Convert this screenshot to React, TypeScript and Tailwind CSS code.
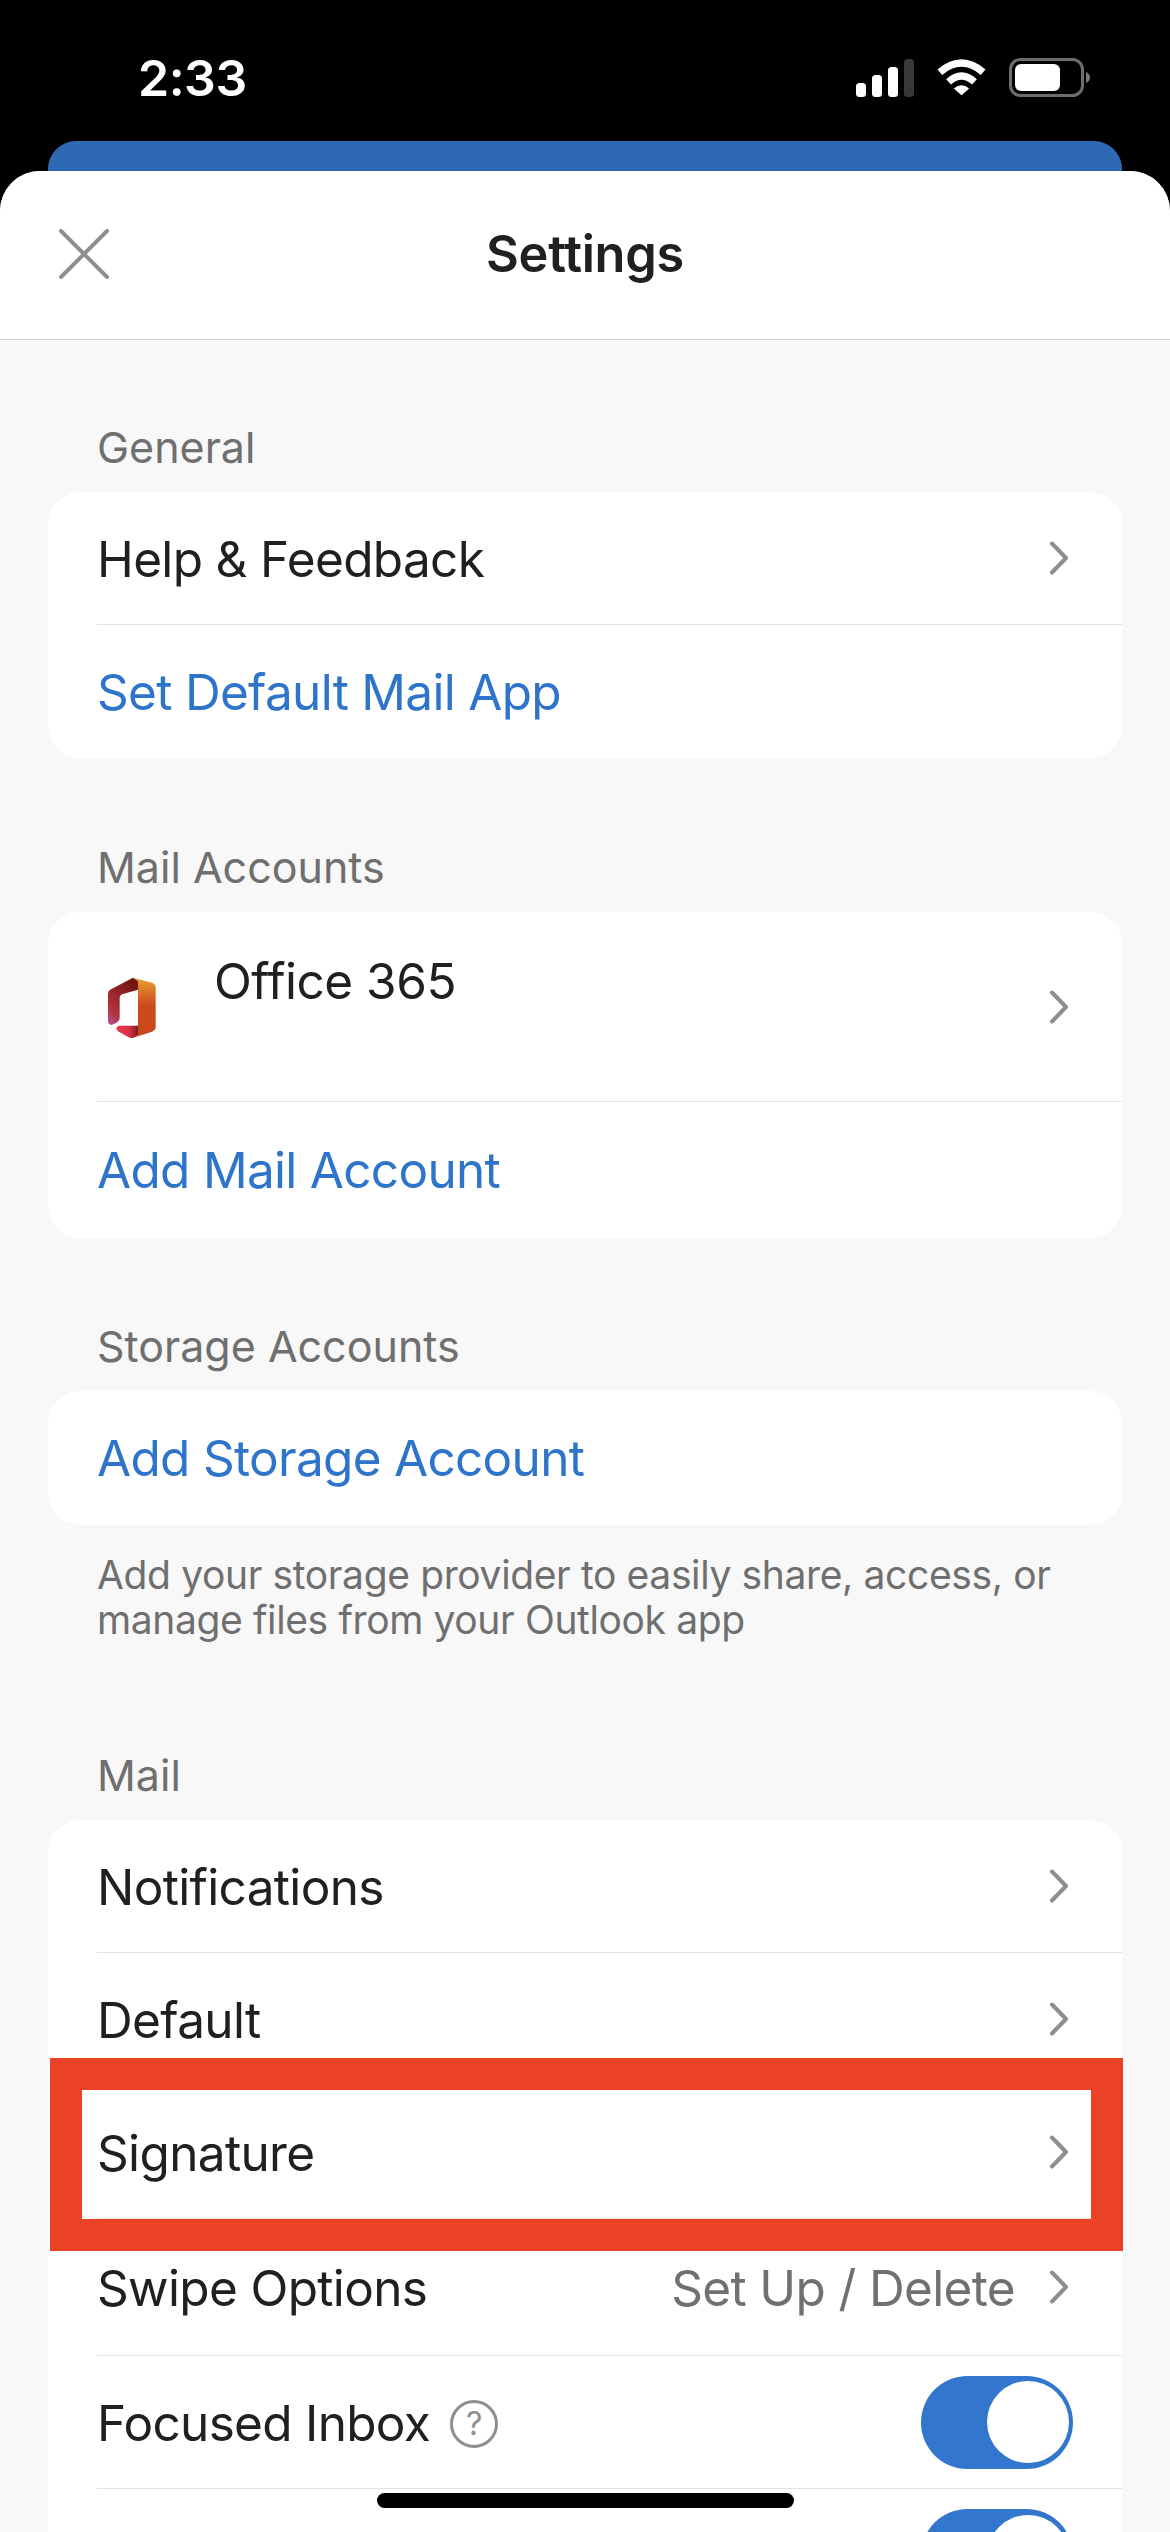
import React from "react";

const Chevron = () => (
  <svg width="20" height="34" viewBox="0 0 20 34" fill="none" className="shrink-0">
    <path d="M3 2.5 L17 17 L3 31.5" stroke="#8e8e8e" strokeWidth="4" strokeLinecap="round" strokeLinejoin="round" />
  </svg>
);

const Toggle = () => (
  <div className="w-[152px] h-[93px] rounded-full bg-[#3376cd] flex items-center justify-end pr-[4px] shrink-0">
    <div className="w-[82px] h-[82px] rounded-full bg-white" />
  </div>
);

const Row = ({ children, last, h = "h-[133px]" }: { children: React.ReactNode; last?: boolean; h?: string }) => (
  <div className="pl-[49px]">
    <div className={`${h} flex items-center pr-[53px] ${last ? "" : "border-b-[1.5px] border-[#e4e4e4]"}`}>
      {children}
    </div>
  </div>
);

const Title = ({ children }: { children: React.ReactNode }) => (
  <span className="pt-[3px] text-[49.5px] tracking-[-0.65px] leading-none text-[#202020] flex-1">{children}</span>
);

const Link = ({ children }: { children: React.ReactNode }) => (
  <span className="pt-[2px] text-[49.5px] tracking-[-0.7px] leading-none text-[#2f74cb]">{children}</span>
);

const Label = ({ children, mt }: { children: React.ReactNode; mt: string }) => (
  <div className={`${mt} h-[90px] pl-[97px] flex items-center text-[43px] text-[#6f6f6f]`}>{children}</div>
);

const Card = ({ children }: { children: React.ReactNode }) => (
  <div className="mx-[48px] bg-white rounded-[32px] overflow-hidden">{children}</div>
);

const OfficeLogo = () => (
  <svg width="48" height="61" viewBox="0 0 144 183" className="shrink-0">
    <defs>
      <linearGradient id="ofa" x1="0" y1="1" x2="0.6" y2="0">
        <stop offset="0" stopColor="#b0559c" />
        <stop offset="0.3" stopColor="#b2323c" />
        <stop offset="1" stopColor="#751510" />
      </linearGradient>
      <linearGradient id="ofb" x1="0" y1="0" x2="0" y2="1">
        <stop offset="0" stopColor="#e8a030" />
        <stop offset="0.45" stopColor="#cc4b1e" />
        <stop offset="1" stopColor="#c8481c" />
      </linearGradient>
      <linearGradient id="ofc" x1="0" y1="0" x2="1" y2="0">
        <stop offset="0" stopColor="#e83a50" />
        <stop offset="0.6" stopColor="#d8303f" />
        <stop offset="1" stopColor="#7a1a1a" />
      </linearGradient>
    </defs>
    <path d="M75 2 L6 38 Q0 42 0 50 L0 135 Q4 148 16 142 L28 136 Q35 130 35 122 L35 62 Q35 54 45 51 L90 38 L90 12 Z" fill="url(#ofa)" />
    <path d="M78 3 L132 17 Q143 21 143 32 L143 150 Q143 160 132 164 L74 183 Q85 180 90 172 L90 38 L90 12 Z" fill="url(#ofb)" />
    <path d="M32 146 L90 146 L90 172 Q85 180 74 183 Q68 184 62 181 L30 163 Q20 152 32 146 Z" fill="url(#ofc)" />
  </svg>
);

export default function App() {
  return (
    <div className="w-[1170px] h-[2532px] overflow-hidden bg-black relative font-['Inter','Liberation_Sans',sans-serif]">
      <div className="h-[141px] flex items-start justify-between pl-[138px] pr-[80px] text-white">
        <span className="mt-[50px] text-[50px] tracking-[-0.5px] leading-[56px] font-semibold">2:33</span>
        <div className="mt-[58px] flex items-center gap-[23px]">
          <svg width="58" height="38" viewBox="0 0 58 38">
            <rect x="0" y="24" width="10" height="14" rx="3.5" fill="#fff" />
            <rect x="16" y="16" width="10" height="22" rx="3.5" fill="#fff" />
            <rect x="32" y="8" width="10" height="30" rx="3.5" fill="#fff" />
            <rect x="48" y="0" width="10" height="38" rx="3.5" fill="#383838" />
          </svg>
          <svg width="49" height="37" viewBox="0 0 51 37" fill="none">
            <path d="M3 13 Q25.5 -6 48 13" stroke="#fff" strokeWidth="7.5" />
            <path d="M12 23 Q25.5 11 39 23" stroke="#fff" strokeWidth="7.5" />
            <path d="M17.5 30 Q25.5 23 33.5 30 L25.5 37 Z" fill="#fff" />
          </svg>
          <svg width="81" height="39" viewBox="0 0 81 39" fill="none">
            <rect x="1.5" y="1.5" width="72" height="36" rx="10" stroke="#6d6d6d" strokeWidth="3" />
            <rect x="6" y="6" width="45" height="27" rx="6" fill="#fff" />
            <path d="M77 14 Q81 16 81 19.5 Q81 23 77 25 Z" fill="#7a7a7a" />
          </svg>
        </div>
      </div>
      <div className="h-[30px] mx-[48px] bg-[#2e69b6] rounded-t-[28px]" />
      <div className="h-[2361px] bg-[#f8f8f8] rounded-t-[40px] overflow-hidden">
        <div className="h-[169px] bg-white border-b-[1.5px] border-[#cfcfcf] relative flex items-center justify-center">
          <svg width="50" height="50" viewBox="0 0 50 50" fill="none" className="absolute left-[59px] top-[58px]">
            <path d="M2 2 L48 48 M48 2 L2 48" stroke="#8f8f8f" strokeWidth="4" strokeLinecap="round" />
          </svg>
          <span className="text-[50.5px] tracking-[-0.3px] font-semibold text-[#202020] leading-none -mt-[2px]">Settings</span>
        </div>

        <Label mt="mt-[62px]">General</Label>
        <Card>
          <Row><Title>Help &amp; Feedback</Title><Chevron /></Row>
          <Row last><Link>Set Default Mail App</Link></Row>
        </Card>

        <Label mt="mt-[64px]">Mail Accounts</Label>
        <Card>
          <div className="pl-[49px]">
            <div className="h-[190px] border-b-[1.5px] border-[#e4e4e4] flex items-start pr-[53px]">
              <div className="mt-[65px] ml-[11px] shrink-0"><OfficeLogo /></div>
              <span className="mt-[42px] ml-[58px] text-[49.5px] tracking-[-0.5px] leading-[54px] text-[#202020] flex-1">Office 365</span>
              <div className="mt-[78px]"><Chevron /></div>
            </div>
          </div>
          <Row last h="h-[136px]"><Link>Add Mail Account</Link></Row>
        </Card>

        <Label mt="mt-[63px]">Storage Accounts</Label>
        <Card>
          <Row last h="h-[134px]"><Link>Add Storage Account</Link></Row>
        </Card>
        <div className="mt-[27px] px-[97px] text-[39px] tracking-[-0.37px] leading-[45px] text-[#6f6f6f]">
          Add your storage provider to easily share, access, or
          <br />
          manage files from your Outlook app
        </div>

        <Label mt="mt-[88px]">Mail</Label>
        <Card>
          <Row><Title>Notifications</Title><Chevron /></Row>
          <Row><Title>Default</Title><Chevron /></Row>
          <Row><Title>Signature</Title><Chevron /></Row>
          <Row h="h-[137px]">
            <Title>Swipe Options</Title>
            <span className="pt-[3px] text-[49.5px] tracking-[-0.65px] leading-none text-[#707070] mr-[34px]">Set Up / Delete</span>
            <Chevron />
          </Row>
          <Row>
            <span className="pt-[3px] text-[49.5px] tracking-[-0.7px] leading-none text-[#202020]">Focused Inbox</span>
            <span className="ml-[20px] mt-[3px] w-[48px] h-[48px] rounded-full border-[3px] border-[#8f8f8f] text-[#8f8f8f] text-[32px] leading-none flex items-center justify-center">?</span>
            <span className="flex-1" />
            <div className="-mr-[4px]"><Toggle /></div>
          </Row>
          <Row last>
            <span className="flex-1" />
            <div className="-mr-[4px]"><Toggle /></div>
          </Row>
        </Card>
      </div>

      <div className="absolute left-[50px] top-[2058px] w-[1073px] h-[193px] border-[32px] border-[#eb4126]" />
      <div className="absolute left-[377px] top-[2493px] w-[417px] h-[15px] rounded-full bg-black" />
    </div>
  );
}
